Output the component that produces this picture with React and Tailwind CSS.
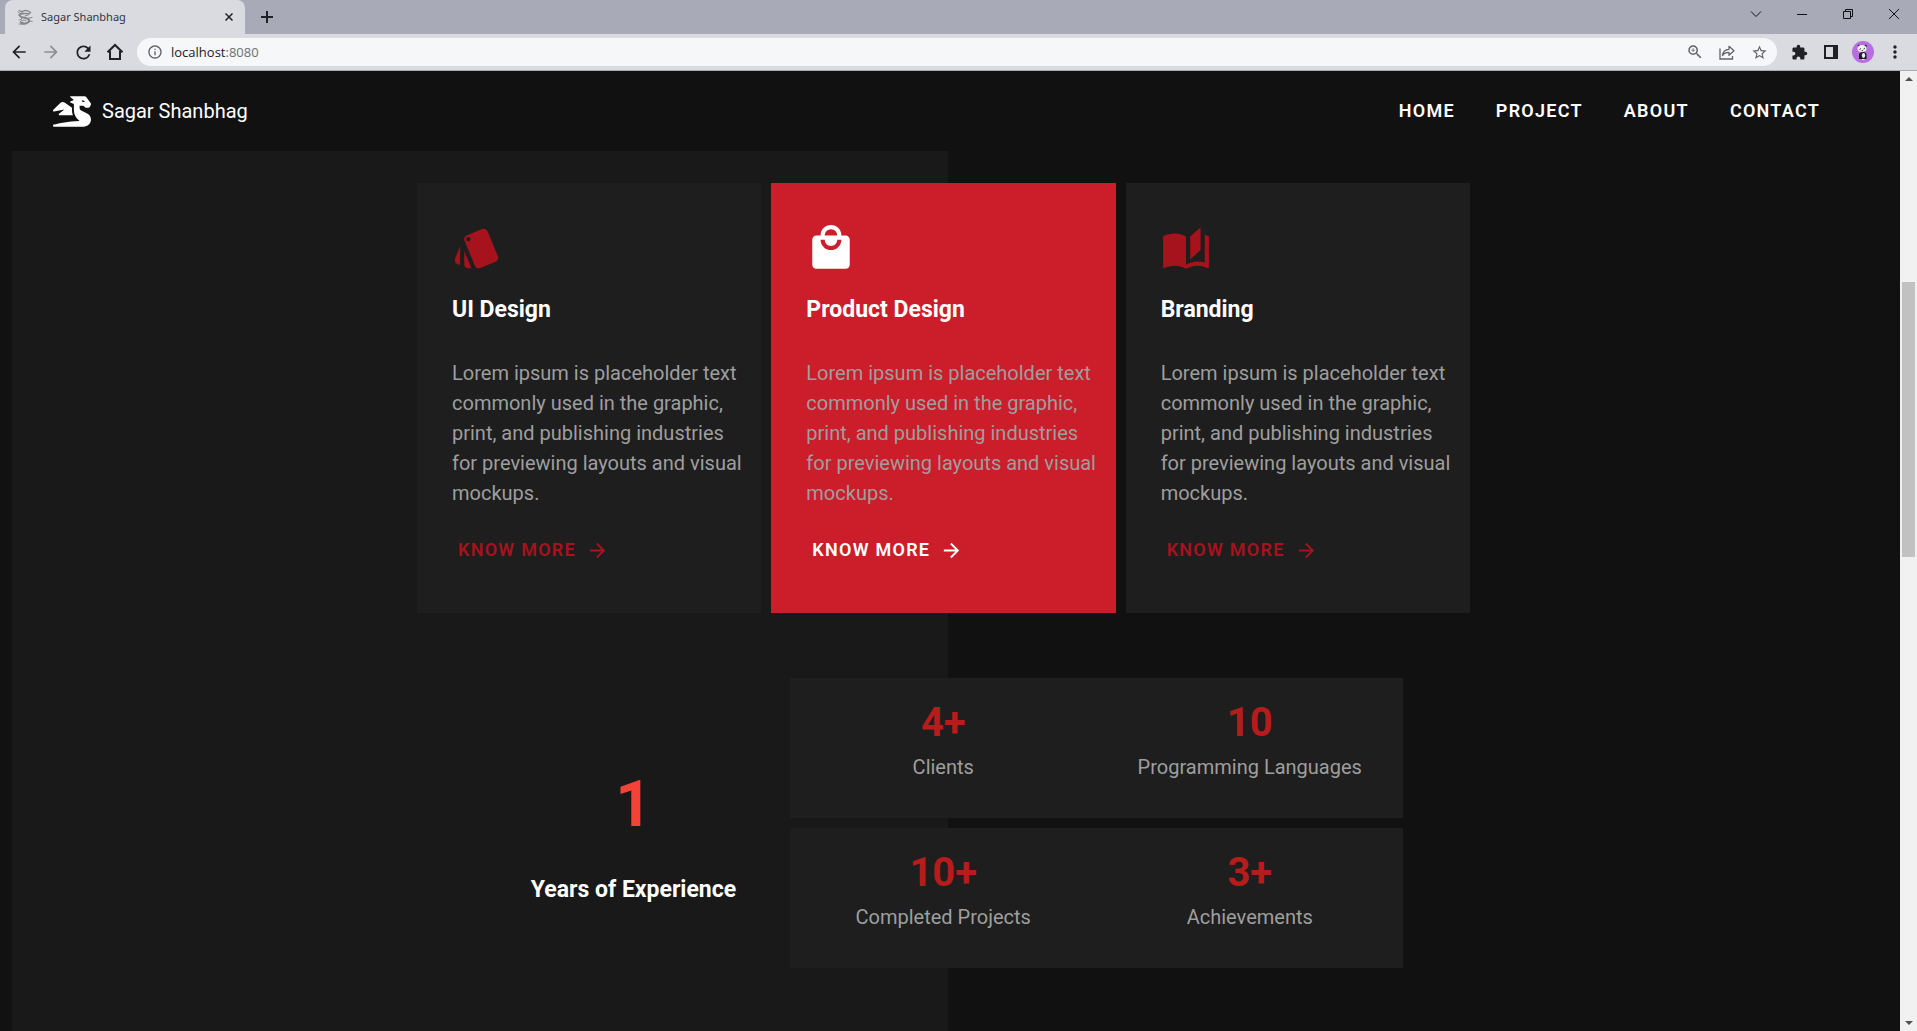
import React from "react";
import { FaDragon } from "react-icons/fa";
import {
  MdArrowBack,
  MdArrowForward,
  MdExtension,
  MdInfoOutline,
  MdLocalMall,
  MdMoreVert,
  MdRefresh,
  MdStarBorder,
  MdStyle,
  MdZoomIn,
} from "react-icons/md";

const blurb =
  "Lorem ipsum is placeholder text commonly used in the graphic, print, and publishing industries for previewing layouts and visual mockups.";

function BookIcon({ className }) {
  return (
    <svg viewBox="0 0 24 24" className={className} fill="currentColor">
      <path d="M19 2L14 6.500V17.500L19 13V2M6.500 5C4.550 5 2.450 5.400 1 6.500V21.160C1 21.410 1.250 21.660 1.500 21.660C1.600 21.660 1.650 21.590 1.750 21.590C3.100 20.940 5.050 20.500 6.500 20.500C8.450 20.500 10.550 20.900 12 22C13.350 21.150 15.800 20.500 17.500 20.500C19.150 20.500 20.850 20.810 22.250 21.560C22.350 21.610 22.400 21.590 22.500 21.590C22.750 21.590 23 21.340 23 21.090V6.500C22.400 6.050 21.750 5.750 21 5.500V19C19.900 18.650 18.700 18.500 17.500 18.500C15.800 18.500 13.350 19.150 12 20V6.500C10.550 5.400 8.450 5 6.500 5Z" />
    </svg>
  );
}

const services = [
  { title: "UI Design", Icon: MdStyle },
  { title: "Product Design", Icon: MdLocalMall, active: true },
  { title: "Branding", Icon: BookIcon },
];

const stats = [
  [
    { value: "4+", label: "Clients" },
    { value: "10", label: "Programming Languages" },
  ],
  [
    { value: "10+", label: "Completed Projects" },
    { value: "3+", label: "Achievements" },
  ],
];

function DragonFavicon() {
  return (
    <svg viewBox="0 0 16 16" className="size-4" fill="none" stroke="#85868a" strokeLinecap="round">
      <path d="M2 1.500l3 1.200 3-1.200 3 .3 2.500 1.700-1.500 1.300-3-.3-2.500.2" strokeWidth="1.300" />
      <path d="M6 4.500C3.500 4 2 5.500 3 7s4 1.500 6.500 2.200 3.500 2.300 2 3.800-5 1.800-7.500.8" strokeWidth="2" />
      <path d="M1 3l2 1.500M1.500 6l1 1M5 8.500l-1 2M8 7l4-1.500M12 9l3-.5M13 12l2.300.5M9 11.500c-2-1-5 0-6 1.500" />
      <path d="M2 15c3 .8 6 .5 8-.3M4 10.500l-2 .5" strokeWidth="0.800" />
    </svg>
  );
}

function HomeIcon() {
  return (
    <svg viewBox="0 0 18 18" className="size-[18px]" fill="none" stroke="#202124" strokeWidth="2">
      <path d="M1.500 9.200L9 2l7.500 7.200M4 8v8h10V8" />
    </svg>
  );
}

function ShareIcon() {
  return (
    <svg viewBox="0 0 18 18" className="size-[18px]" fill="none" stroke="#5f6368" strokeWidth="1.300">
      <path d="M2 5.500V16h12.500v-3" />
      <path d="M4.500 12.500C5 8.500 7.500 6.500 11 6.300V3.300l5 4.500-5 4.500V9.400c-3 0-5 1-6.500 3.100z" strokeLinejoin="round" />
    </svg>
  );
}

function SidePanelIcon() {
  return (
    <svg viewBox="0 0 14 14" className="size-3.5">
      <path d="M1 1h12v12H1z" fill="none" stroke="#202124" strokeWidth="2" />
      <path d="M9 1h4v12H9z" fill="#202124" />
    </svg>
  );
}

function Avatar() {
  return (
    <svg viewBox="0 0 22 22" className="size-[22px]">
      <circle cx="11" cy="11" r="11" fill="#b66ee0" />
      <circle cx="7" cy="5" r="1.300" fill="#222" />
      <circle cx="13.500" cy="5" r="1.300" fill="#222" />
      <ellipse cx="10" cy="7.500" rx="4.500" ry="3.500" fill="#f1f1f1" />
      <path d="M7.500 8.500l1.500-1M13 7l-1.500 1M9.700 9.600h1.300" stroke="#333" strokeWidth="1" />
      <path d="M7 13c1.500-2.500 6.500-3 7.500 0v5H7z" fill="#1d1d1f" />
      <ellipse cx="11.500" cy="14.500" rx="1.700" ry="2.400" fill="#eee" />
      <path d="M10 18.500h2.500" stroke="#eee" strokeWidth="1" />
    </svg>
  );
}

function ToolButton({ label, children }) {
  return (
    <button aria-label={label} className="flex h-8 w-8 items-center justify-center text-[#202124]">
      {children}
    </button>
  );
}

function WindowButton({ label, d }) {
  return (
    <button aria-label={label} className="flex h-7 w-[46px] items-center justify-center">
      <svg viewBox="0 0 12 12" className="size-3" fill="none" stroke="#111">
        <path d={d} />
      </svg>
    </button>
  );
}

function TabStrip() {
  return (
    <div className="flex h-[34px] shrink-0 items-start bg-[#a8abb7]">
      <div className="ml-[5px] flex h-[34px] w-60 items-center rounded-t-lg bg-[#dadbe1] pl-3 pr-2">
        <DragonFavicon />
        <span className="ml-2 flex-1 font-['Noto_Sans',sans-serif] text-[11px] text-[#33343a]">Sagar Shanbhag</span>
        <button aria-label="Close tab" className="flex size-4 items-center justify-center">
          <svg viewBox="0 0 8 8" className="size-2" stroke="#202124" strokeWidth="1.500">
            <path d="M.5.5l7 7M7.500.5l-7 7" />
          </svg>
        </button>
      </div>
      <button aria-label="New tab" className="ml-4 flex h-[34px] w-3 items-center justify-center">
        <svg viewBox="0 0 12 12" className="size-3" stroke="#202124" strokeWidth="2">
          <path d="M6 0v12M0 6h12" />
        </svg>
      </button>
      <div className="ml-auto flex">
        <WindowButton label="Search tabs" d="M1 3.500l5 5 5-5" />
        <WindowButton label="Minimize" d="M1 6.500h10" />
        <WindowButton label="Restore" d="M1.500 3.500h7v7h-7zM3.500 3.500v-2h7v7h-2" />
        <WindowButton label="Close" d="M1 1l10 10M11 1L1 11" />
      </div>
    </div>
  );
}

function Toolbar() {
  return (
    <div className="flex h-[37px] shrink-0 items-center border-b border-[#a9abb3] bg-[#dadbe1] pl-[3px] pr-1.5">
      <ToolButton label="Back">
        <MdArrowBack className="size-5" />
      </ToolButton>
      <button aria-label="Forward" className="flex h-8 w-8 items-center justify-center text-[#8b8d92]">
        <MdArrowForward className="size-5" />
      </button>
      <ToolButton label="Reload">
        <MdRefresh className="size-[21px]" />
      </ToolButton>
      <ToolButton label="Home">
        <HomeIcon />
      </ToolButton>
      <div className="mx-1.5 flex h-7 flex-1 items-center rounded-full bg-[#f6f7f9] pl-2.5 pr-0.5 text-[#5f6368]">
        <MdInfoOutline className="size-4" />
        <div className="relative ml-2 flex-1 text-[13px] leading-5">
          <input
            aria-label="Address"
            defaultValue="localhost:8080"
            className="w-full bg-transparent text-transparent caret-black outline-none"
          />
          <span aria-hidden="true" className="pointer-events-none absolute inset-0 text-[#6b6e73]">
            <span className="text-[#202124]">localhost</span>:8080
          </span>
        </div>
        <button aria-label="Zoom" className="flex w-8 justify-center">
          <MdZoomIn className="size-[18px]" />
        </button>
        <button aria-label="Share" className="flex w-8 justify-center">
          <ShareIcon />
        </button>
        <button aria-label="Bookmark" className="flex w-8 justify-center">
          <MdStarBorder className="size-[17px]" />
        </button>
      </div>
      <ToolButton label="Extensions">
        <MdExtension className="size-[17px]" />
      </ToolButton>
      <ToolButton label="Side panel">
        <SidePanelIcon />
      </ToolButton>
      <ToolButton label="Profile">
        <Avatar />
      </ToolButton>
      <ToolButton label="Menu">
        <MdMoreVert className="size-5" />
      </ToolButton>
    </div>
  );
}

function NavBar() {
  return (
    <header className="flex h-20 shrink-0 items-center pl-[53px] pr-20 text-white">
      <a href="#home" className="flex items-center gap-[11px] text-xl">
        <FaDragon className="h-[31px] w-[38px]" />
        Sagar Shanbhag
      </a>
      <nav className="ml-auto flex gap-[41px] text-lg font-semibold tracking-[0.07em]">
        <a href="#home">HOME</a>
        <a href="#project">PROJECT</a>
        <a href="#about">ABOUT</a>
        <a href="#contact">CONTACT</a>
      </nav>
    </header>
  );
}

function ServiceCard({ title, Icon, active }) {
  return (
    <article className={`pb-[45px] pl-[35px] pr-4 pt-10 ${active ? "bg-[#cc1d2a]" : "bg-[#1e1e1e]"}`}>
      <Icon className={`size-[50px] ${active ? "text-white" : "text-[#a6131d]"}`} />
      <h2 className="mb-[31px] mt-5 text-[23px] font-bold leading-[34px] text-white">{title}</h2>
      <p className="text-xl leading-[30px] text-[#9e9e9e]">{blurb}</p>
      <button
        className={`mt-6 flex h-9 items-center gap-2.5 pl-1.5 text-lg font-semibold tracking-[0.07em] ${
          active ? "text-white" : "text-[#a6131d]"
        }`}
      >
        KNOW MORE
        <MdArrowForward className="size-[23px]" />
      </button>
    </article>
  );
}

function Stats() {
  return (
    <div className="mx-auto flex w-full max-w-[933px] items-center pr-[7px]">
      <div className="w-[313px] pt-[26px] text-center">
        <div className="text-[64px] font-bold leading-[80px] text-[#f44336]">1</div>
        <div className="mt-7 text-[23px] font-bold leading-[34px] text-white">Years of Experience</div>
      </div>
      <div className="flex flex-1 flex-col gap-2.5">
        {stats.map((row) => (
          <div key={row[0].label} className="grid grid-cols-2 bg-[#1e1e1e] pb-9 pt-5 text-center">
            {row.map((s) => (
              <div key={s.label}>
                <div className="text-[40px] font-bold leading-[50px] text-[#b71c1c]">{s.value}</div>
                <div className="mt-1 text-xl leading-[30px] text-[#9e9e9e]">{s.label}</div>
              </div>
            ))}
          </div>
        ))}
      </div>
    </div>
  );
}

function Scrollbar() {
  return (
    <div className="flex w-[17px] shrink-0 flex-col items-center bg-[#f1f1f1] py-1.5">
      <svg viewBox="0 0 8 4" className="h-1 w-2" fill="#505050">
        <path d="M4 0l4 4H0z" />
      </svg>
      <div className="flex w-[13px] flex-1 flex-col">
        <div className="flex-[201]" />
        <div className="flex-[275] bg-[#c1c1c1]" />
        <div className="flex-[464]" />
      </div>
      <svg viewBox="0 0 8 4" className="h-1 w-2" fill="#505050">
        <path d="M0 0h8L4 4z" />
      </svg>
    </div>
  );
}

export default function App() {
  return (
    <div className="flex h-screen flex-col overflow-hidden font-['Open_Sans',sans-serif]">
      <TabStrip />
      <Toolbar />
      <div className="flex min-h-0 flex-1">
        <div className="flex min-w-0 flex-1 flex-col overflow-hidden bg-[#111111] font-[Roboto,sans-serif]">
          <NavBar />
          <main className="ml-3 mr-4 flex-1 bg-[linear-gradient(#191919,#191919)] bg-[length:50%_100%] bg-no-repeat pr-[9px] pt-8">
            <div className="mx-auto mb-[65px] grid max-w-[1053px] grid-cols-3 gap-2.5">
              {services.map((s) => (
                <ServiceCard key={s.title} {...s} />
              ))}
            </div>
            <Stats />
          </main>
        </div>
        <Scrollbar />
      </div>
    </div>
  );
}
